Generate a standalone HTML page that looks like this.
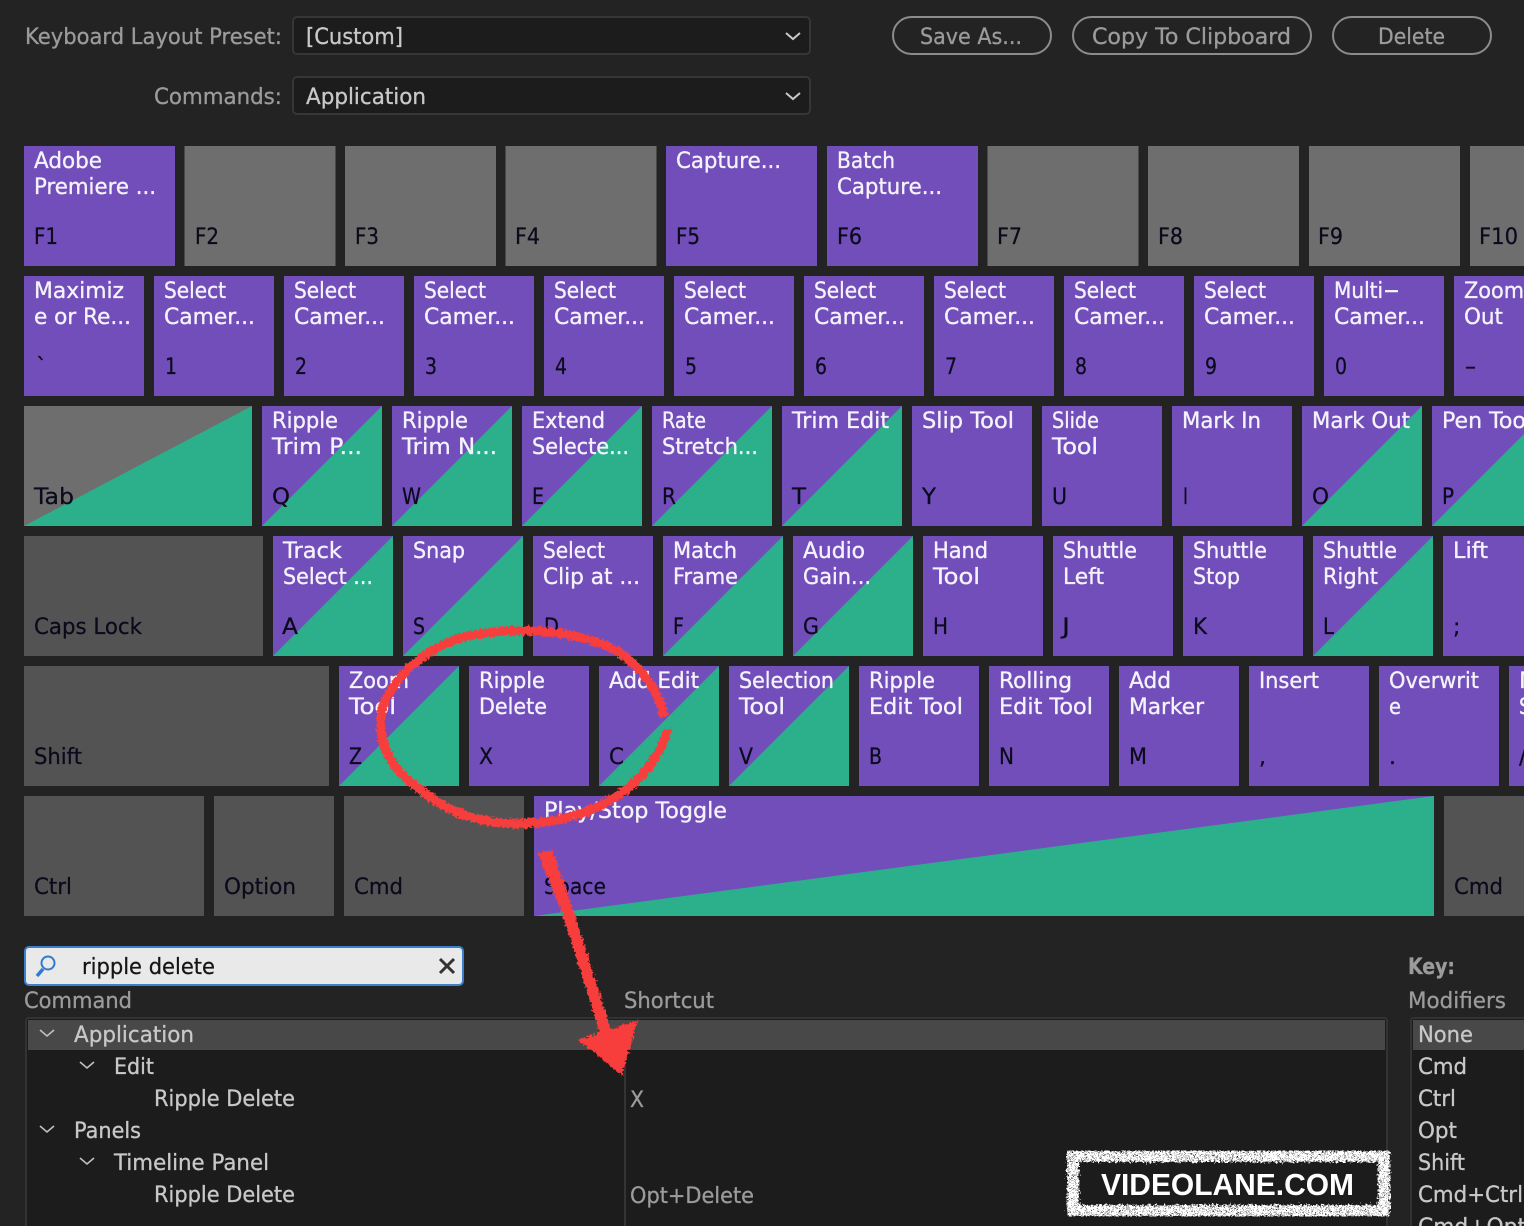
<!DOCTYPE html>
<html><head><meta charset="utf-8"><style>
html,body{margin:0;padding:0;background:#232323;width:1524px;height:1226px;overflow:hidden}
svg{display:block}
text{font-family:"DejaVu Sans",sans-serif;font-size:22px}
.w text{fill:#f4f2fa;stroke:#f4f2fa;stroke-width:.35}
.b text{fill:#0b0a1c;stroke:#0b0a1c;stroke-width:.25}
.g text{fill:#9b9b9b;stroke:#9b9b9b;stroke-width:.3}
.t text{fill:#c8c8c8;stroke:#c8c8c8;stroke-width:.3}
</style></head><body>
<svg xmlns="http://www.w3.org/2000/svg" width="1524" height="1226" viewBox="0 0 1524 1226">
<defs>
<filter id="rough" x="-5%" y="-5%" width="110%" height="110%"><feTurbulence type="fractalNoise" baseFrequency="0.4" numOctaves="2" seed="4"/><feDisplacementMap in="SourceGraphic" scale="7" xChannelSelector="R" yChannelSelector="G"/></filter>
<filter id="rough2" x="-5%" y="-10%" width="110%" height="120%"><feTurbulence type="fractalNoise" baseFrequency="0.8" numOctaves="2" seed="9" result="n"/><feColorMatrix in="n" type="matrix" values="0 0 0 0 0 0 0 0 0 0 0 0 0 0 0 0 0 0 -14 9.5" result="m"/><feComposite in="SourceGraphic" in2="m" operator="in" result="s"/><feTurbulence type="fractalNoise" baseFrequency="0.5" numOctaves="2" seed="3" result="d"/><feDisplacementMap in="s" in2="d" scale="8" xChannelSelector="R" yChannelSelector="G"/></filter>
</defs>
<rect width="1524" height="1226" fill="#232323"/>

<!-- top controls -->
<g fill="#1c1c1c" stroke="#363636" stroke-width="2">
<rect x="293" y="17" width="517" height="37" rx="4"/>
<rect x="293" y="77" width="517" height="37" rx="4"/>
</g>
<g fill="none" stroke="#c8c8c8" stroke-width="2"><path d="M786 33l7 6 7-6"/><path d="M786 93l7 6 7-6"/></g>
<g fill="none" stroke="#8c8c8c" stroke-width="2">
<rect x="893" y="17" width="158" height="37" rx="18.5"/>
<rect x="1073" y="17" width="238" height="37" rx="18.5"/>
<rect x="1333" y="17" width="158" height="37" rx="18.5"/>
</g>
<g class="g">
<text x="25" y="44" textLength="257" lengthAdjust="spacingAndGlyphs">Keyboard Layout Preset:</text>
<text x="154" y="104" textLength="128" lengthAdjust="spacingAndGlyphs">Commands:</text>
<text x="920" y="44" textLength="102" lengthAdjust="spacingAndGlyphs">Save As...</text>
<text x="1092" y="44" textLength="199" lengthAdjust="spacingAndGlyphs">Copy To Clipboard</text>
<text x="1378" y="44" textLength="67" lengthAdjust="spacingAndGlyphs">Delete</text>
</g>
<g class="t">
<text x="306" y="44" textLength="97" lengthAdjust="spacingAndGlyphs">[Custom]</text>
<text x="306" y="104" textLength="120" lengthAdjust="spacingAndGlyphs">Application</text>
</g>

<!-- keys: purple -->
<g fill="#724eba">
<rect x="24" y="146" width="151" height="120"/><rect x="666" y="146" width="151" height="120"/><rect x="827" y="146" width="151" height="120"/>
<rect x="24" y="276" width="120" height="120"/><rect x="154" y="276" width="120" height="120"/><rect x="284" y="276" width="120" height="120"/><rect x="414" y="276" width="120" height="120"/><rect x="544" y="276" width="120" height="120"/><rect x="674" y="276" width="120" height="120"/><rect x="804" y="276" width="120" height="120"/><rect x="934" y="276" width="120" height="120"/><rect x="1064" y="276" width="120" height="120"/><rect x="1194" y="276" width="120" height="120"/><rect x="1324" y="276" width="120" height="120"/><rect x="1454" y="276" width="120" height="120"/>
<rect x="262" y="406" width="120" height="120"/><rect x="392" y="406" width="120" height="120"/><rect x="522" y="406" width="120" height="120"/><rect x="652" y="406" width="120" height="120"/><rect x="782" y="406" width="120" height="120"/><rect x="912" y="406" width="120" height="120"/><rect x="1042" y="406" width="120" height="120"/><rect x="1172" y="406" width="120" height="120"/><rect x="1302" y="406" width="120" height="120"/><rect x="1432" y="406" width="120" height="120"/>
<rect x="273" y="536" width="120" height="120"/><rect x="403" y="536" width="120" height="120"/><rect x="533" y="536" width="120" height="120"/><rect x="663" y="536" width="120" height="120"/><rect x="793" y="536" width="120" height="120"/><rect x="923" y="536" width="120" height="120"/><rect x="1053" y="536" width="120" height="120"/><rect x="1183" y="536" width="120" height="120"/><rect x="1313" y="536" width="120" height="120"/><rect x="1443" y="536" width="120" height="120"/>
<rect x="339" y="666" width="120" height="120"/><rect x="469" y="666" width="120" height="120"/><rect x="599" y="666" width="120" height="120"/><rect x="729" y="666" width="120" height="120"/><rect x="859" y="666" width="120" height="120"/><rect x="989" y="666" width="120" height="120"/><rect x="1119" y="666" width="120" height="120"/><rect x="1249" y="666" width="120" height="120"/><rect x="1379" y="666" width="120" height="120"/><rect x="1509" y="666" width="120" height="120"/>
<rect x="534" y="796" width="900" height="120"/>
</g>
<!-- keys: light gray -->
<g fill="#6e6e6e">
<rect x="184.5" y="146" width="151" height="120"/><rect x="345" y="146" width="151" height="120"/><rect x="505.5" y="146" width="151" height="120"/><rect x="987.5" y="146" width="151" height="120"/><rect x="1148" y="146" width="151" height="120"/><rect x="1309" y="146" width="151" height="120"/><rect x="1470" y="146" width="151" height="120"/>
<rect x="24" y="406" width="228" height="120"/>
</g>
<!-- keys: dark gray -->
<g fill="#535353">
<rect x="24" y="536" width="239" height="120"/><rect x="24" y="666" width="305" height="120"/><rect x="24" y="796" width="180" height="120"/><rect x="214" y="796" width="120" height="120"/><rect x="344" y="796" width="180" height="120"/><rect x="1444" y="796" width="180" height="120"/>
</g>
<!-- keys: green triangles -->
<g fill="#2cb08c">
<path d="M252 406V526H24Z"/>
<path d="M382 406V526H262Z"/><path d="M512 406V526H392Z"/><path d="M642 406V526H522Z"/><path d="M772 406V526H652Z"/><path d="M902 406V526H782Z"/><path d="M1422 406V526H1302Z"/><path d="M1552 406V526H1432Z"/>
<path d="M393 536V656H273Z"/><path d="M523 536V656H403Z"/><path d="M783 536V656H663Z"/><path d="M913 536V656H793Z"/><path d="M1433 536V656H1313Z"/>
<path d="M459 666V786H339Z"/><path d="M719 666V786H599Z"/><path d="M849 666V786H729Z"/>
<path d="M1434 796V916H534Z"/>
</g>

<!-- command labels -->
<g class="w">
<text x="34" y="168" textLength="68" lengthAdjust="spacingAndGlyphs">Adobe</text>
<text x="34" y="194" textLength="122" lengthAdjust="spacingAndGlyphs">Premiere ...</text>
<text x="676" y="168" textLength="105" lengthAdjust="spacingAndGlyphs">Capture...</text>
<text x="837" y="168" textLength="58" lengthAdjust="spacingAndGlyphs">Batch</text>
<text x="837" y="194" textLength="105" lengthAdjust="spacingAndGlyphs">Capture...</text>

<text x="34" y="298" textLength="90" lengthAdjust="spacingAndGlyphs">Maximiz</text>
<text x="34" y="324" textLength="97" lengthAdjust="spacingAndGlyphs">e or Re...</text>
<text x="164" y="298" textLength="62" lengthAdjust="spacingAndGlyphs">Select</text><text x="164" y="324" textLength="91" lengthAdjust="spacingAndGlyphs">Camer...</text>
<text x="294" y="298" textLength="62" lengthAdjust="spacingAndGlyphs">Select</text><text x="294" y="324" textLength="91" lengthAdjust="spacingAndGlyphs">Camer...</text>
<text x="424" y="298" textLength="62" lengthAdjust="spacingAndGlyphs">Select</text><text x="424" y="324" textLength="91" lengthAdjust="spacingAndGlyphs">Camer...</text>
<text x="554" y="298" textLength="62" lengthAdjust="spacingAndGlyphs">Select</text><text x="554" y="324" textLength="91" lengthAdjust="spacingAndGlyphs">Camer...</text>
<text x="684" y="298" textLength="62" lengthAdjust="spacingAndGlyphs">Select</text><text x="684" y="324" textLength="91" lengthAdjust="spacingAndGlyphs">Camer...</text>
<text x="814" y="298" textLength="62" lengthAdjust="spacingAndGlyphs">Select</text><text x="814" y="324" textLength="91" lengthAdjust="spacingAndGlyphs">Camer...</text>
<text x="944" y="298" textLength="62" lengthAdjust="spacingAndGlyphs">Select</text><text x="944" y="324" textLength="91" lengthAdjust="spacingAndGlyphs">Camer...</text>
<text x="1074" y="298" textLength="62" lengthAdjust="spacingAndGlyphs">Select</text><text x="1074" y="324" textLength="91" lengthAdjust="spacingAndGlyphs">Camer...</text>
<text x="1204" y="298" textLength="62" lengthAdjust="spacingAndGlyphs">Select</text><text x="1204" y="324" textLength="91" lengthAdjust="spacingAndGlyphs">Camer...</text>
<text x="1334" y="298" textLength="66" lengthAdjust="spacingAndGlyphs">Multi−</text><text x="1334" y="324" textLength="91" lengthAdjust="spacingAndGlyphs">Camer...</text>
<text x="1464" y="298" textLength="60" lengthAdjust="spacingAndGlyphs">Zoom</text><text x="1464" y="324" textLength="39" lengthAdjust="spacingAndGlyphs">Out</text>

<text x="272" y="428" textLength="66" lengthAdjust="spacingAndGlyphs">Ripple</text><text x="272" y="454" textLength="90" lengthAdjust="spacingAndGlyphs">Trim P...</text>
<text x="402" y="428" textLength="66" lengthAdjust="spacingAndGlyphs">Ripple</text><text x="402" y="454" textLength="95" lengthAdjust="spacingAndGlyphs">Trim N...</text>
<text x="532" y="428" textLength="73" lengthAdjust="spacingAndGlyphs">Extend</text><text x="532" y="454" textLength="97" lengthAdjust="spacingAndGlyphs">Selecte...</text>
<text x="662" y="428" textLength="44" lengthAdjust="spacingAndGlyphs">Rate</text><text x="662" y="454" textLength="96" lengthAdjust="spacingAndGlyphs">Stretch...</text>
<text x="792" y="428" textLength="97" lengthAdjust="spacingAndGlyphs">Trim Edit</text>
<text x="922" y="428" textLength="92" lengthAdjust="spacingAndGlyphs">Slip Tool</text>
<text x="1052" y="428" textLength="47" lengthAdjust="spacingAndGlyphs">Slide</text><text x="1052" y="454" textLength="46" lengthAdjust="spacingAndGlyphs">Tool</text>
<text x="1182" y="428" textLength="79" lengthAdjust="spacingAndGlyphs">Mark In</text>
<text x="1312" y="428" textLength="98" lengthAdjust="spacingAndGlyphs">Mark Out</text>
<text x="1442" y="428" textLength="90" lengthAdjust="spacingAndGlyphs">Pen Tool</text>

<text x="283" y="558" textLength="59" lengthAdjust="spacingAndGlyphs">Track</text><text x="283" y="584" textLength="90" lengthAdjust="spacingAndGlyphs">Select ...</text>
<text x="413" y="558" textLength="52" lengthAdjust="spacingAndGlyphs">Snap</text>
<text x="543" y="558" textLength="62" lengthAdjust="spacingAndGlyphs">Select</text><text x="543" y="584" textLength="97" lengthAdjust="spacingAndGlyphs">Clip at ...</text>
<text x="673" y="558" textLength="64" lengthAdjust="spacingAndGlyphs">Match</text><text x="673" y="584" textLength="65" lengthAdjust="spacingAndGlyphs">Frame</text>
<text x="803" y="558" textLength="62" lengthAdjust="spacingAndGlyphs">Audio</text><text x="803" y="584" textLength="68" lengthAdjust="spacingAndGlyphs">Gain...</text>
<text x="933" y="558" textLength="55" lengthAdjust="spacingAndGlyphs">Hand</text><text x="933" y="584" textLength="47" lengthAdjust="spacingAndGlyphs">Tool</text>
<text x="1063" y="558" textLength="74" lengthAdjust="spacingAndGlyphs">Shuttle</text><text x="1063" y="584" textLength="41" lengthAdjust="spacingAndGlyphs">Left</text>
<text x="1193" y="558" textLength="74" lengthAdjust="spacingAndGlyphs">Shuttle</text><text x="1193" y="584" textLength="47" lengthAdjust="spacingAndGlyphs">Stop</text>
<text x="1323" y="558" textLength="74" lengthAdjust="spacingAndGlyphs">Shuttle</text><text x="1323" y="584" textLength="55" lengthAdjust="spacingAndGlyphs">Right</text>
<text x="1453" y="558" textLength="35" lengthAdjust="spacingAndGlyphs">Lift</text>

<text x="349" y="688" textLength="60" lengthAdjust="spacingAndGlyphs">Zoom</text><text x="349" y="714" textLength="47" lengthAdjust="spacingAndGlyphs">Tool</text>
<text x="479" y="688" textLength="66" lengthAdjust="spacingAndGlyphs">Ripple</text><text x="479" y="714" textLength="68" lengthAdjust="spacingAndGlyphs">Delete</text>
<text x="609" y="688" textLength="90" lengthAdjust="spacingAndGlyphs">Add Edit</text>
<text x="739" y="688" textLength="95" lengthAdjust="spacingAndGlyphs">Selection</text><text x="739" y="714" textLength="46" lengthAdjust="spacingAndGlyphs">Tool</text>
<text x="869" y="688" textLength="66" lengthAdjust="spacingAndGlyphs">Ripple</text><text x="869" y="714" textLength="94" lengthAdjust="spacingAndGlyphs">Edit Tool</text>
<text x="999" y="688" textLength="73" lengthAdjust="spacingAndGlyphs">Rolling</text><text x="999" y="714" textLength="94" lengthAdjust="spacingAndGlyphs">Edit Tool</text>
<text x="1129" y="688" textLength="42" lengthAdjust="spacingAndGlyphs">Add</text><text x="1129" y="714" textLength="75" lengthAdjust="spacingAndGlyphs">Marker</text>
<text x="1259" y="688" textLength="60" lengthAdjust="spacingAndGlyphs">Insert</text>
<text x="1389" y="688" textLength="90" lengthAdjust="spacingAndGlyphs">Overwrit</text><text x="1389" y="714" textLength="12" lengthAdjust="spacingAndGlyphs">e</text>
<text x="1519" y="688" textLength="20" lengthAdjust="spacingAndGlyphs">M</text><text x="1519" y="714" textLength="12" lengthAdjust="spacingAndGlyphs">S</text>
<text x="544" y="818" textLength="183" lengthAdjust="spacingAndGlyphs">Play/Stop Toggle</text>
</g>

<!-- key caps -->
<g class="b">
<text x="34" y="244" textLength="24" lengthAdjust="spacingAndGlyphs">F1</text><text x="195" y="244" textLength="24" lengthAdjust="spacingAndGlyphs">F2</text><text x="355" y="244" textLength="24" lengthAdjust="spacingAndGlyphs">F3</text><text x="515" y="244" textLength="25" lengthAdjust="spacingAndGlyphs">F4</text><text x="676" y="244" textLength="24" lengthAdjust="spacingAndGlyphs">F5</text><text x="837" y="244" textLength="25" lengthAdjust="spacingAndGlyphs">F6</text><text x="997" y="244" textLength="25" lengthAdjust="spacingAndGlyphs">F7</text><text x="1158" y="244" textLength="25" lengthAdjust="spacingAndGlyphs">F8</text><text x="1318" y="244" textLength="25" lengthAdjust="spacingAndGlyphs">F9</text><text x="1479" y="244" textLength="39" lengthAdjust="spacingAndGlyphs">F10</text>
<text x="36" y="374">`</text><text x="165" y="374" textLength="12" lengthAdjust="spacingAndGlyphs">1</text><text x="295" y="374" textLength="12" lengthAdjust="spacingAndGlyphs">2</text><text x="425" y="374" textLength="12" lengthAdjust="spacingAndGlyphs">3</text><text x="555" y="374" textLength="12" lengthAdjust="spacingAndGlyphs">4</text><text x="685" y="374" textLength="12" lengthAdjust="spacingAndGlyphs">5</text><text x="815" y="374" textLength="12" lengthAdjust="spacingAndGlyphs">6</text><text x="945" y="374" textLength="12" lengthAdjust="spacingAndGlyphs">7</text><text x="1075" y="374" textLength="12" lengthAdjust="spacingAndGlyphs">8</text><text x="1205" y="374" textLength="12" lengthAdjust="spacingAndGlyphs">9</text><text x="1335" y="374" textLength="12" lengthAdjust="spacingAndGlyphs">0</text><text x="1465" y="374" textLength="11" lengthAdjust="spacingAndGlyphs">–</text>
<text x="34" y="504" textLength="40" lengthAdjust="spacingAndGlyphs">Tab</text><text x="272" y="504" textLength="18" lengthAdjust="spacingAndGlyphs">Q</text><text x="402" y="504" textLength="19" lengthAdjust="spacingAndGlyphs">W</text><text x="532" y="504" textLength="12" lengthAdjust="spacingAndGlyphs">E</text><text x="662" y="504" textLength="14" lengthAdjust="spacingAndGlyphs">R</text><text x="792" y="504" textLength="14" lengthAdjust="spacingAndGlyphs">T</text><text x="922" y="504" textLength="14" lengthAdjust="spacingAndGlyphs">Y</text><text x="1052" y="504" textLength="15" lengthAdjust="spacingAndGlyphs">U</text><text x="1183" y="504" textLength="5" lengthAdjust="spacingAndGlyphs">I</text><text x="1312" y="504" textLength="17" lengthAdjust="spacingAndGlyphs">O</text><text x="1442" y="504" textLength="12" lengthAdjust="spacingAndGlyphs">P</text>
<text x="34" y="634" textLength="108" lengthAdjust="spacingAndGlyphs">Caps Lock</text><text x="282" y="634" textLength="16" lengthAdjust="spacingAndGlyphs">A</text><text x="413" y="634" textLength="12" lengthAdjust="spacingAndGlyphs">S</text><text x="544" y="634" textLength="15" lengthAdjust="spacingAndGlyphs">D</text><text x="673" y="634" textLength="11" lengthAdjust="spacingAndGlyphs">F</text><text x="803" y="634" textLength="16" lengthAdjust="spacingAndGlyphs">G</text><text x="933" y="634" textLength="15" lengthAdjust="spacingAndGlyphs">H</text><text x="1062" y="634" textLength="8" lengthAdjust="spacingAndGlyphs">J</text><text x="1193" y="634" textLength="14" lengthAdjust="spacingAndGlyphs">K</text><text x="1323" y="634" textLength="11" lengthAdjust="spacingAndGlyphs">L</text><text x="1453" y="634">;</text>
<text x="34" y="764" textLength="48" lengthAdjust="spacingAndGlyphs">Shift</text><text x="349" y="764" textLength="13" lengthAdjust="spacingAndGlyphs">Z</text><text x="479" y="764" textLength="14" lengthAdjust="spacingAndGlyphs">X</text><text x="609" y="764" textLength="15" lengthAdjust="spacingAndGlyphs">C</text><text x="739" y="764" textLength="14" lengthAdjust="spacingAndGlyphs">V</text><text x="869" y="764" textLength="13" lengthAdjust="spacingAndGlyphs">B</text><text x="999" y="764" textLength="15" lengthAdjust="spacingAndGlyphs">N</text><text x="1129" y="764" textLength="18" lengthAdjust="spacingAndGlyphs">M</text><text x="1259" y="764">,</text><text x="1389" y="764">.</text><text x="1519" y="764">/</text>
<text x="34" y="894" textLength="38" lengthAdjust="spacingAndGlyphs">Ctrl</text><text x="224" y="894" textLength="72" lengthAdjust="spacingAndGlyphs">Option</text><text x="354" y="894" textLength="49" lengthAdjust="spacingAndGlyphs">Cmd</text><text x="544" y="894" textLength="62" lengthAdjust="spacingAndGlyphs">Space</text><text x="1454" y="894" textLength="49" lengthAdjust="spacingAndGlyphs">Cmd</text>
</g>

<!-- search -->
<rect x="25" y="947" width="438" height="38" rx="4" fill="#e9e9e9" stroke="#3a80ca" stroke-width="2"/>
<g fill="none" stroke="#2f7ad0"><circle cx="48" cy="963" r="6.5" stroke-width="2"/><path d="M43 969l-6 7" stroke-width="3.5"/></g>
<text x="82" y="974" textLength="133" lengthAdjust="spacingAndGlyphs" fill="#151515" stroke="#151515" stroke-width=".25">ripple delete</text>
<path d="M440 959l14 14M454 959l-14 14" stroke="#333" stroke-width="3" fill="none"/>

<g class="g">
<text x="24" y="1008" textLength="108" lengthAdjust="spacingAndGlyphs">Command</text>
<text x="624" y="1008" textLength="90" lengthAdjust="spacingAndGlyphs">Shortcut</text>
<text x="1408" y="1008" textLength="98" lengthAdjust="spacingAndGlyphs">Modifiers</text>
<text x="1408" y="974" textLength="47" lengthAdjust="spacingAndGlyphs" font-weight="bold">Key:</text>
</g>

<!-- table -->
<rect x="26" y="1018" width="1361" height="230" rx="3" fill="#1c1c1c" stroke="#333" stroke-width="2"/>
<rect x="28" y="1020" width="1357" height="30" fill="#484848"/>
<path d="M625 1050V1226" stroke="#343434" stroke-width="2"/>
<rect x="1411" y="1018" width="140" height="230" rx="3" fill="#1c1c1c" stroke="#333" stroke-width="2"/>
<rect x="1413" y="1020" width="120" height="30" fill="#484848"/>
<g fill="none" stroke="#c0c0c0" stroke-width="1.6">
<path d="M40 1030l7 6 7-6"/><path d="M80 1062l7 6 7-6"/><path d="M40 1126l7 6 7-6"/><path d="M80 1158l7 6 7-6"/>
</g>
<g class="t">
<text x="74" y="1042" textLength="120" lengthAdjust="spacingAndGlyphs">Application</text>
<text x="114" y="1074" textLength="40" lengthAdjust="spacingAndGlyphs">Edit</text>
<text x="154" y="1106" textLength="141" lengthAdjust="spacingAndGlyphs">Ripple Delete</text>
<text x="74" y="1138" textLength="67" lengthAdjust="spacingAndGlyphs">Panels</text>
<text x="114" y="1170" textLength="155" lengthAdjust="spacingAndGlyphs">Timeline Panel</text>
<text x="154" y="1202" textLength="141" lengthAdjust="spacingAndGlyphs">Ripple Delete</text>
<text x="1418" y="1042" textLength="55" lengthAdjust="spacingAndGlyphs">None</text>
<text x="1418" y="1074" textLength="49" lengthAdjust="spacingAndGlyphs">Cmd</text>
<text x="1418" y="1106" textLength="38" lengthAdjust="spacingAndGlyphs">Ctrl</text>
<text x="1418" y="1138" textLength="39" lengthAdjust="spacingAndGlyphs">Opt</text>
<text x="1418" y="1170" textLength="47" lengthAdjust="spacingAndGlyphs">Shift</text>
<text x="1418" y="1202" textLength="105" lengthAdjust="spacingAndGlyphs">Cmd+Ctrl</text>
<text x="1418" y="1234" textLength="108" lengthAdjust="spacingAndGlyphs">Cmd+Opt</text>
</g>
<g class="g">
<text x="630" y="1107" textLength="14" lengthAdjust="spacingAndGlyphs">X</text>
<text x="630" y="1203" textLength="124" lengthAdjust="spacingAndGlyphs">Opt+Delete</text>
</g>

<!-- red annotation -->
<g filter="url(#rough)" fill="#f83c3c">
<path d="M664 717C660 695 645 670 620 653C600 640 565 633 540 631C510 629 485 632 460 638C440 644 425 655 412 665C395 682 382 700 381 717C380 730 382 742 387 753C395 768 403 778 417 787C435 802 453 812 473 818C495 823 515 825 533 823C553 822 572 817 590 810C605 804 618 796 630 787C645 773 655 760 663 743C666 737 667 733 667 729" fill="none" stroke="#f83c3c" stroke-width="9"/>
<path d="M538 853L552 849L574 912L611 1030L600 1033L563 916Z"/>
<path d="M638 1020L578 1040L606 1062L622 1076Z"/>
</g>

<!-- watermark -->
<path d="M1073 1156H1384V1211H1073Z" fill="none" stroke="#fff" stroke-width="12" filter="url(#rough2)"/>
<text x="1101" y="1195" textLength="253" lengthAdjust="spacingAndGlyphs" fill="#fff" font-weight="bold" style="font-family:'Liberation Sans',sans-serif;font-size:31px">VIDEOLANE.COM</text>
</svg>
</body></html>
